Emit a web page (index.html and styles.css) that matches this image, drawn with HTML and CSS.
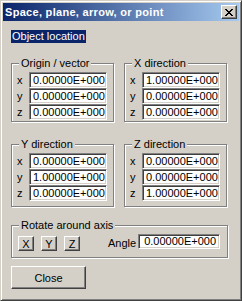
FILE: index.html
```html
<!DOCTYPE html>
<html lang="en">
<head>
    <meta charset="UTF-8">
    <title>Space, plane, arrow, or point</title>
    <link rel="stylesheet" href="styles.css">
</head>
<body>
    <div class="window">
        <div class="titlebar">
            <span class="title">Space, plane, arrow, or point</span>
            <button class="caption-btn" title="Close">
                <svg width="8" height="7" viewBox="0 0 8 7" shape-rendering="crispEdges">
                    <path d="M0 0h2v1h-2zM6 0h2v1h-2zM1 1h2v1h-2zM5 1h2v1h-2zM2 2h4v1h-4zM3 3h2v1h-2zM2 4h4v1h-4zM1 5h2v1h-2zM5 5h2v1h-2zM0 6h2v1h-2zM6 6h2v1h-2z" fill="#000"/>
                </svg>
            </button>
        </div>

        <div class="client">
            <div class="location"><span class="selected">Object location</span></div>

            <div class="groups">
                <div class="group">
                    <div class="group-title">Origin / vector</div>
                    <div class="row"><span class="axis">x</span><span class="field">0.00000E+000</span></div>
                    <div class="row"><span class="axis">y</span><span class="field">0.00000E+000</span></div>
                    <div class="row"><span class="axis">z</span><span class="field">0.00000E+000</span></div>
                </div>
                <div class="group">
                    <div class="group-title">X direction</div>
                    <div class="row"><span class="axis">x</span><span class="field">1.00000E+000</span></div>
                    <div class="row"><span class="axis">y</span><span class="field">0.00000E+000</span></div>
                    <div class="row"><span class="axis">z</span><span class="field">0.00000E+000</span></div>
                </div>
                <div class="group">
                    <div class="group-title">Y direction</div>
                    <div class="row"><span class="axis">x</span><span class="field">0.00000E+000</span></div>
                    <div class="row"><span class="axis">y</span><span class="field">1.00000E+000</span></div>
                    <div class="row"><span class="axis">z</span><span class="field">0.00000E+000</span></div>
                </div>
                <div class="group">
                    <div class="group-title">Z direction</div>
                    <div class="row"><span class="axis">x</span><span class="field">0.00000E+000</span></div>
                    <div class="row"><span class="axis">y</span><span class="field">0.00000E+000</span></div>
                    <div class="row"><span class="axis">z</span><span class="field">1.00000E+000</span></div>
                </div>
            </div>

            <div class="group rotate">
                <div class="group-title">Rotate around axis</div>
                <div class="rotate-row">
                    <button class="btn small">X</button>
                    <button class="btn small">Y</button>
                    <button class="btn small">Z</button>
                    <span class="angle-label">Angle</span>
                    <span class="field angle">0.00000E+000</span>
                </div>
            </div>

            <button class="btn close">Close</button>
        </div>
    </div>
</body>
</html>
```

FILE: styles.css
```css
body {
    margin: 0;
    font-family: "Liberation Sans", Arial, sans-serif;
    font-size: 11px;
    color: #000;
}

.window {
    width: 242px;
    height: 301px;
    box-sizing: border-box;
    background-color: #d4d0c8;
    border: 1px solid;
    border-color: #d4d0c8 #404040 #404040 #d4d0c8;
    box-shadow: inset 1px 1px 0 #fff, inset -1px -1px 0 #808080;
    padding: 2px;
}

.titlebar {
    height: 18px;
    display: flex;
    align-items: center;
    justify-content: space-between;
    padding: 0 2px;
    background: linear-gradient(to right, #0a246a, #a6caf0);
}

.title {
    color: #fff;
    font-weight: bold;
    letter-spacing: 0.3px;
}

.caption-btn {
    width: 16px;
    height: 14px;
    box-sizing: border-box;
    padding: 0;
    display: flex;
    align-items: center;
    justify-content: center;
    background-color: #d4d0c8;
    border: 1px solid;
    border-color: #fff #404040 #404040 #fff;
    box-shadow: inset -1px -1px 0 #808080;
}

.client {
    padding: 0 8px;
}

.location {
    margin-top: 9px;
    height: 13px;
}

.selected {
    display: inline-block;
    height: 13px;
    line-height: 13px;
    padding: 0 1px;
    background-color: #0a246a;
    color: #fff;
}

.groups {
    margin-top: 20px;
    display: grid;
    grid-template-columns: 104px 104px;
    grid-template-rows: 60px 64px;
    column-gap: 9px;
    row-gap: 21px;
}

.group {
    width: 103px;
    box-sizing: border-box;
    border: 1px solid #808080;
    box-shadow: 1px 1px 0 #fff, inset 1px 1px 0 #fff;
    margin-bottom: 1px;
}

.group-title {
    width: fit-content;
    height: 13px;
    line-height: 13px;
    margin: -7px 0 2px 7px;
    padding: 0 2px;
    background-color: #d4d0c8;
}

.row {
    display: flex;
    align-items: center;
}

.axis {
    width: 17px;
    padding-left: 5px;
    box-sizing: border-box;
}

.field {
    width: 78px;
    height: 16px;
    box-sizing: border-box;
    padding-left: 3px;
    line-height: 14px;
    background-color: #fff;
    border: 1px solid;
    border-color: #808080 #fff #fff #808080;
    box-shadow: inset 1px 1px 0 #404040, inset -1px -1px 0 #d4d0c8;
}

.rotate {
    width: 217px;
    height: 33px;
    margin-top: 17px;
}

.rotate-row {
    display: flex;
    align-items: flex-start;
    padding-left: 6px;
}

.btn {
    box-sizing: border-box;
    padding: 0;
    font-family: inherit;
    font-size: 11px;
    color: #000;
    background-color: #d4d0c8;
    border: 1px solid;
    border-color: #fff #404040 #404040 #fff;
    box-shadow: inset -1px -1px 0 #808080;
}

.small {
    width: 16px;
    height: 15px;
    margin-top: 2px;
    margin-right: 7px;
    line-height: 12px;
}

.angle-label {
    margin-top: 3px;
    margin-left: 21px;
    margin-right: 2px;
}

.angle {
    width: 82px;
    height: 15px;
    line-height: 13px;
    padding-left: 5px;
}

.close {
    display: block;
    width: 75px;
    height: 23px;
    margin-top: 8px;
}
```
